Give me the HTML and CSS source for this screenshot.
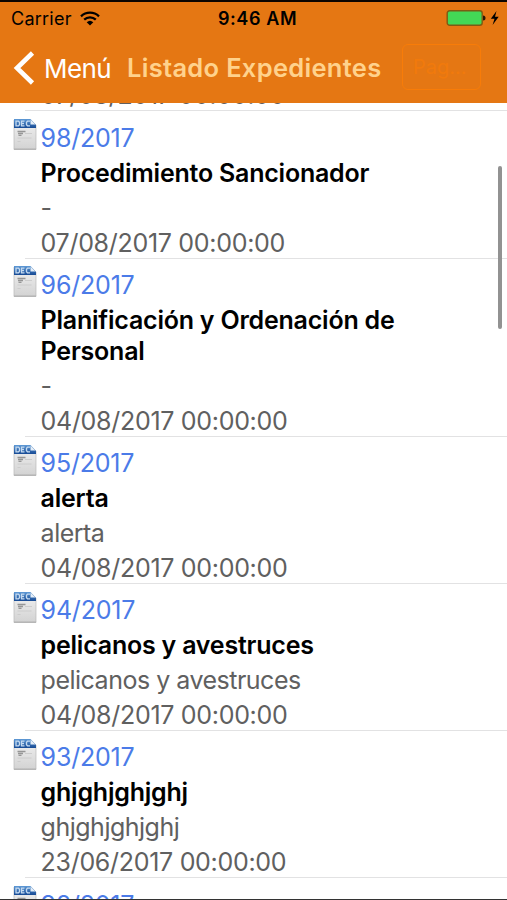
FILE: index.html
```html
<!DOCTYPE html>
<html lang="es">
<head>
    <meta charset="UTF-8">
    <meta name="viewport" content="width=device-width, initial-scale=1.0">
    <title>Listado Expedientes</title>
    <link rel="stylesheet" href="styles.css">
</head>
<body>
    <!-- Icono de documento compartido por todas las filas -->
    <svg class="sprite" width="0" height="0">
        <defs>
            <linearGradient id="paper" x1="0" y1="0" x2="0" y2="1">
                <stop offset="0" stop-color="#f1f1f1"/>
                <stop offset="1" stop-color="#d3d3d3"/>
            </linearGradient>
            <linearGradient id="band" x1="0" y1="0" x2="0" y2="1">
                <stop offset="0" stop-color="#5f9ad6"/>
                <stop offset="1" stop-color="#174a94"/>
            </linearGradient>
            <symbol id="doc" viewBox="0 0 24 33">
                <path d="M1 2h17l5 5v24H1z" fill="url(#paper)" stroke="#b9b9b9" stroke-width=".7"/>
                <path d="M.8 31.3h22.4" stroke="#aaa" stroke-width="1"/>
                <path d="M1 1h16.5l5.500 6v3H1z" fill="url(#band)"/>
                <path d="M17.5 1.5V6.5H22.5z" fill="#e4eef8"/>
                <path d="M3 3.200h2.500l1 1v2.600l-1 1H3zM11.500 3.200h-3v4.600h3M8.500 5.500h2.500M17 3.200h-2.500l-1 1v2.600l1 1H17" fill="none" stroke="#c5daf0" stroke-width="1.300"/>
                <path d="M4.500 13.500h8M5 15.500h5M5.500 17.300h3" stroke="#969696" stroke-width="1.300"/>
                <path d="M12 15.500h7M4.500 20h14M4.500 23.500h3" stroke="#c8c8c8" stroke-width=".8"/>
            </symbol>
        </defs>
    </svg>

    <div class="screen">
        <header class="header">
            <div class="status">
                <div class="carrier">
                    <span>Carrier</span>
                    <svg width="20" height="15" viewBox="0 0 20 15">
                        <path d="M1 5.300a13 13 0 0 1 18 0M4.200 8.700a8.400 8.400 0 0 1 11.600 0" fill="none" stroke="#000" stroke-width="2.300"/>
                        <path d="M6.700 11.200a4.800 4.800 0 0 1 6.600 0L10 14.500z"/>
                    </svg>
                </div>
                <span class="clock">9:46 AM</span>
                <svg class="battery" width="54" height="18" viewBox="0 0 54 18">
                    <rect x="1.200" y="1.700" width="35" height="14.600" rx="2.500" fill="#43d856" stroke="#7d5b13" stroke-width="1.400"/>
                    <path d="M37 6.500q2.500 0 2.500 2.500t-2.500 2.500z" fill="#2a1804"/>
                    <path d="M50.500 2L44.800 9.800h3.700L46.600 16l6.100-8.200H49z"/>
                </svg>
            </div>
            <nav class="navbar">
                <a class="back" href="#">
                    <svg width="22" height="34" viewBox="0 0 22 34">
                        <path d="M19.500 2L4 17l15.500 15" fill="none" stroke="#fff" stroke-width="4.600"/>
                    </svg>
                    <span>Menú</span>
                </a>
                <h1>Listado Expedientes</h1>
                <button class="page">Pag...</button>
            </nav>
        </header>

        <main class="content">
            <ul class="list">
                <li class="item">
                    <div class="info">
                        <time>07/08/2017 00:00:00</time>
                    </div>
                </li>
                <li class="item">
                    <svg class="doc"><use href="#doc"/></svg>
                    <div class="info">
                        <a href="#">98/2017</a>
                        <h2>Procedimiento Sancionador</h2>
                        <p>-</p>
                        <time>07/08/2017 00:00:00</time>
                    </div>
                </li>
                <li class="item">
                    <svg class="doc"><use href="#doc"/></svg>
                    <div class="info">
                        <a href="#">96/2017</a>
                        <h2>Planificación y Ordenación de Personal</h2>
                        <p>-</p>
                        <time>04/08/2017 00:00:00</time>
                    </div>
                </li>
                <li class="item">
                    <svg class="doc"><use href="#doc"/></svg>
                    <div class="info">
                        <a href="#">95/2017</a>
                        <h2>alerta</h2>
                        <p>alerta</p>
                        <time>04/08/2017 00:00:00</time>
                    </div>
                </li>
                <li class="item">
                    <svg class="doc"><use href="#doc"/></svg>
                    <div class="info">
                        <a href="#">94/2017</a>
                        <h2>pelicanos y avestruces</h2>
                        <p>pelicanos y avestruces</p>
                        <time>04/08/2017 00:00:00</time>
                    </div>
                </li>
                <li class="item">
                    <svg class="doc"><use href="#doc"/></svg>
                    <div class="info">
                        <a href="#">93/2017</a>
                        <h2>ghjghjghjghj</h2>
                        <p>ghjghjghjghj</p>
                        <time>23/06/2017 00:00:00</time>
                    </div>
                </li>
                <li class="item">
                    <svg class="doc"><use href="#doc"/></svg>
                    <div class="info">
                        <a href="#">92/2017</a>
                    </div>
                </li>
            </ul>
            <div class="scrollbar"></div>
        </main>
    </div>
</body>
</html>
```
FILE: styles.css
```css
/* Estilos generales */
* {
    margin: 0;
    padding: 0;
    box-sizing: border-box;
}

body {
    font-family: Inter, 'Liberation Sans', sans-serif;
    background-color: #fff;
    color: #000;
}

a {
    text-decoration: none;
}

.sprite {
    display: block;
}

.screen {
    display: flex;
    flex-direction: column;
    height: 900px;
    overflow: hidden;
    border-top: 2px solid #0c0500;
    border-bottom: 1px solid #333;
}

/* Cabecera */
.header {
    flex: none;
    height: 101px;
    background-color: #e57713;
}

.status {
    display: grid;
    grid-template-columns: 1fr auto 1fr;
    align-items: center;
    height: 32px;
    padding: 0 7px 0 11px;
    font-size: 18px;
}

.carrier {
    display: flex;
    align-items: center;
    gap: 8px;
    letter-spacing: 0.25px;
}

.clock {
    font-weight: 600;
    letter-spacing: 0.6px;
    margin-left: 4px;
}

.battery {
    justify-self: end;
}

.navbar {
    display: flex;
    align-items: center;
    height: 69px;
    padding: 0 26px 3px 13px;
}

.back {
    display: flex;
    align-items: center;
    gap: 9px;
    width: 114px;
    padding-top: 2px;
    color: #fff;
    font-size: 26px;
    letter-spacing: -0.6px;
}

.navbar h1 {
    flex: 1;
    padding-top: 1px;
    color: #ffd28c;
    font-size: 25.5px;
    font-weight: 600;
    letter-spacing: 0.3px;
    white-space: nowrap;
}

.page {
    width: 79px;
    height: 46px;
    padding-left: 10px;
    border: 1.5px solid #f87c08;
    border-radius: 6px;
    background: none;
    color: #f17a0c;
    font-family: inherit;
    font-size: 20px;
    text-align: left;
}

/* Listado */
.content {
    position: relative;
    flex: 1;
    overflow: hidden;
}

.list {
    list-style: none;
    margin-top: -33.8px;
}

.item {
    display: flex;
    gap: 4px;
    padding: 11.2px 0 0 12.6px;
    background: linear-gradient(#e2e2e3, #e2e2e3) 25px 100% / 100% 1px no-repeat;
}

/* Primera fila, casi oculta bajo la cabecera */
.item:first-child {
    padding-left: 40.6px;
}

.doc {
    flex: none;
    width: 24px;
    height: 33px;
    margin-top: -4.3px;
}

.info {
    display: flex;
    flex-direction: column;
    gap: 4px;
    width: 390px;
    color: #606060;
    font-size: 25px;
    line-height: 31px;
}

.info a {
    color: #4b7be8;
    letter-spacing: -0.2px;
}

.info h2 {
    color: #000;
    font-size: 25px;
    font-weight: 600;
    letter-spacing: -0.22px;
}

.info p {
    letter-spacing: -0.5px;
}

.info time {
    letter-spacing: -0.3px;
}

.scrollbar {
    position: absolute;
    top: 63px;
    right: 5px;
    width: 4px;
    height: 163px;
    border-radius: 2px;
    background-color: #929292;
}
```
